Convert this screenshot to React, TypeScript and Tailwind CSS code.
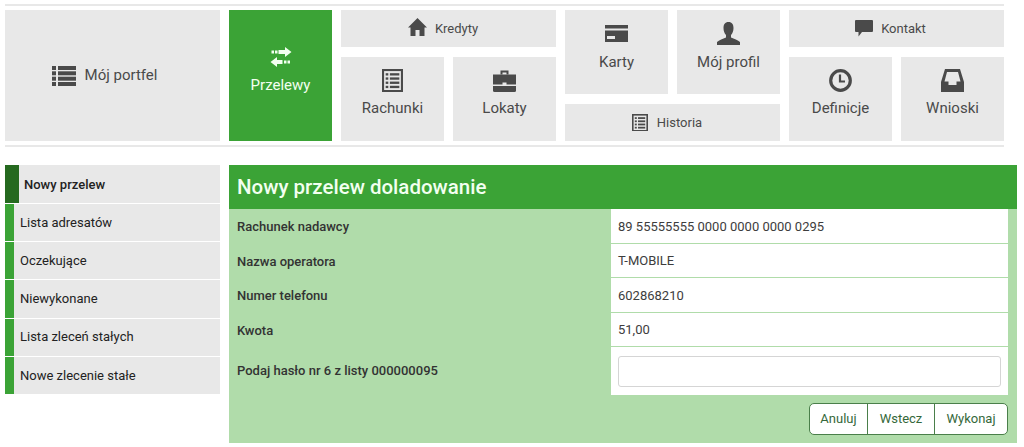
import type { ReactNode } from "react";

const ListIcon = () => (
  <svg width="24" height="20" viewBox="0 0 24 20" fill="currentColor">
    <rect x="0" y="0" width="4" height="4" />
    <rect x="6" y="0" width="18" height="4" />
    <rect x="0" y="5.300" width="4" height="4" />
    <rect x="6" y="5.300" width="18" height="4" />
    <rect x="0" y="10.700" width="4" height="4" />
    <rect x="6" y="10.700" width="18" height="4" />
    <rect x="0" y="16" width="4" height="4" />
    <rect x="6" y="16" width="18" height="4" />
  </svg>
);

const TransferIcon = () => (
  <svg width="22" height="20" viewBox="0 0 22 20" fill="currentColor">
    <rect x="1.500" y="3.500" width="2.500" height="3" />
    <rect x="5" y="3.500" width="2.500" height="3" />
    <path d="M8.500 3H15V0L21.500 5 15 10V7H8.500z" />
    <path d="M12.500 13H7V10L0.500 15 7 20V17H12.500z" />
    <rect x="14" y="13.500" width="2.500" height="3" />
    <rect x="17.500" y="13.500" width="2.500" height="3" />
  </svg>
);

const HomeIcon = () => (
  <svg width="19" height="18" viewBox="0 0 19 18" fill="currentColor" className="mb-1">
    <path d="M9.500 0L19 9.500H16.500V18H11.500V12H7.500V18H2.500V9.500H0z" />
  </svg>
);

const LedgerIcon = ({ size = 21 }: { size?: number }) => (
  <svg width={size} height={size * 1.1} viewBox="0 0 20 22" fill="none">
    <rect x="0" y="0" width="20" height="22" fill="currentColor" />
    <rect x="2" y="2" width="16" height="18" fill="#e8e8e8" />
    <g fill="currentColor">
      <rect x="3.500" y="4" width="2.500" height="2.200" />
      <rect x="7.500" y="4" width="9" height="2.200" />
      <rect x="3.500" y="8" width="2.500" height="2.200" />
      <rect x="7.500" y="8" width="9" height="2.200" />
      <rect x="3.500" y="12" width="2.500" height="2.200" />
      <rect x="7.500" y="12" width="9" height="2.200" />
      <rect x="3.500" y="16" width="2.500" height="2.200" />
      <rect x="7.500" y="16" width="9" height="2.200" />
    </g>
  </svg>
);

const BriefcaseIcon = () => (
  <svg width="23" height="22" viewBox="0 0 23 22" fill="currentColor">
    <path d="M7.500 4.500V0.500h8V4.500H13.500V2.500h-4V4.500z" />
    <path d="M0 4.500h23v10H0z" />
    <path d="M0 16h23v4.500a1.500 1.500 0 0 1-1.500 1.500H1.500A1.500 1.500 0 0 1 0 20.500z" />
    <rect x="9.500" y="12.500" width="4" height="3" fill="#e8e8e8" />
  </svg>
);

const CardIcon = () => (
  <svg width="23" height="17" viewBox="0 0 23 17" fill="currentColor">
    <rect x="0" y="0" width="23" height="3.500" />
    <path d="M0 5.500h23V17H0z" />
    <rect x="2" y="11" width="8" height="3" fill="#e8e8e8" />
  </svg>
);

const UserIcon = () => (
  <svg width="23" height="23" viewBox="0 0 23 23" fill="currentColor">
    <path d="M11.500 0C15 0 16.500 2.500 16.500 6c0 3-1 5.500-2.500 7v2.500c3 1.500 7 2.500 9 4.500v3H0v-3c2-2 6-3 9-4.500V13C7.500 11.500 6.500 9 6.500 6c0-3.500 1.500-6 5-6z" />
  </svg>
);

const ChatIcon = () => (
  <svg width="18" height="17" viewBox="0 0 18 17" fill="currentColor">
    <path d="M1 0h16a1 1 0 0 1 1 1v10a1 1 0 0 1-1 1H7l-3.500 4.500V12H1a1 1 0 0 1-1-1V1a1 1 0 0 1 1-1z" />
  </svg>
);

const ClockIcon = () => (
  <svg width="23" height="23" viewBox="0 0 23 23" fill="none" stroke="currentColor">
    <circle cx="11.500" cy="11.500" r="9.800" strokeWidth="3.200" />
    <path d="M11 5.500V12.500H16" strokeWidth="2.200" />
  </svg>
);

const InboxIcon = () => (
  <svg width="23" height="23" viewBox="0 0 23 23" fill="currentColor">
    <path d="M4 0H19L23 13V23H0V13zM6 3L3.500 12.500H7.500V16H15.500V12.500H19.500L17 3z" fillRule="evenodd" />
  </svg>
);

// kafelek w menu górnym: ikona nad tekstem albo obok
function Tile({
  icon,
  label,
  active,
  className,
}: {
  icon: ReactNode;
  label: string;
  active?: boolean;
  className: string;
}) {
  return (
    <a
      className={`flex items-center justify-center ${
        active ? "bg-[#3ba336] text-[#f2fff0]" : "bg-[#e8e8e8] text-[#4a4a4a]"
      } ${className}`}
    >
      {icon}
      <span>{label}</span>
    </a>
  );
}

const sideItems = ["Lista adresatów", "Oczekujące", "Niewykonane", "Lista zleceń stałych", "Nowe zlecenie stałe"];

const formRows = [
  ["Rachunek nadawcy", "89 55555555 0000 0000 0000 0295"],
  ["Nazwa operatora", "T-MOBILE"],
  ["Numer telefonu", "602868210"],
  ["Kwota", "51,00"],
];

export default function App() {
  return (
    <div className="h-[447px] w-[1024px] overflow-hidden bg-white pt-1 font-['Roboto',sans-serif]">
      <nav className="ml-[5px] w-[999px] border-y-2 border-[#e8e8e8] py-1">
        <div className="grid grid-cols-[repeat(9,103px)] grid-rows-[repeat(3,37px)] gap-x-[9px] gap-y-[10px] text-[15px]">
          <Tile className="col-span-2 row-span-3 gap-[9px] pr-[16px]" icon={<ListIcon />} label="Mój portfel" />
          <Tile className="row-span-3 flex-col gap-[7px] pb-[8px]" active icon={<TransferIcon />} label="Przelewy" />
          <Tile className="col-span-2 gap-2 pr-[11px] text-[13px]" icon={<HomeIcon />} label="Kredyty" />
          <Tile className="row-span-2 flex-col gap-[9px] pb-[6px]" icon={<CardIcon />} label="Karty" />
          <Tile className="row-span-2 flex-col gap-[6px] pb-[8px]" icon={<UserIcon />} label="Mój profil" />
          <Tile className="col-span-2 gap-2 pr-[12px] text-[13px]" icon={<ChatIcon />} label="Kontakt" />
          <Tile className="col-start-4 row-span-2 row-start-2 flex-col gap-[5px] pb-[9px]" icon={<LedgerIcon />} label="Rachunki" />
          <Tile className="col-start-5 row-span-2 row-start-2 flex-col gap-[5px] pb-[9px]" icon={<BriefcaseIcon />} label="Lokaty" />
          <Tile className="col-span-2 col-start-6 row-start-3 gap-[9px] pr-[11px] text-[13px]" icon={<LedgerIcon size={16} />} label="Historia" />
          <Tile className="col-start-8 row-span-2 row-start-2 flex-col gap-[5px] pb-[9px]" icon={<ClockIcon />} label="Definicje" />
          <Tile className="col-start-9 row-span-2 row-start-2 flex-col gap-[5px] pb-[9px]" icon={<InboxIcon />} label="Wnioski" />
        </div>
      </nav>

      <div className="ml-[5px] mt-[18px] flex gap-[9px]">
        <aside className="w-[215px] shrink-0 text-[13px] text-[#222]">
          <div className="flex h-[38px] items-center bg-[#e8e8e8] font-medium">
            <div className="h-full w-[14px] bg-[#25691f]" />
            <span className="ml-[5px] pt-[1px]">Nowy przelew</span>
          </div>
          {sideItems.map((item) => (
            <div key={item} className="flex h-[38.2px] items-center border-t border-white bg-[#e8e8e8]">
              <div className="h-full w-[9px] bg-[#3ba336]" />
              <span className="ml-[6px]">{item}</span>
            </div>
          ))}
        </aside>

        <main className="h-[278px] w-[788px] bg-[#b0dcaa]">
          <h1 className="flex h-[44px] items-center bg-[#3ba336] pl-2 text-[20.5px] font-medium text-[#f2fff0]">
            Nowy przelew doladowanie
          </h1>
          {formRows.map(([label, value]) => (
            <div key={label} className="flex h-[34.5px] items-center">
              <div className="w-[382px] pl-2 pt-[1px] text-[13px] font-medium text-[#333]">{label}</div>
              <div className="flex h-full w-[397px] items-center border-b border-[#b0dcaa] bg-white pl-[7px] pt-[1px] text-[13px] text-[#3d3d3d]">
                {value}
              </div>
            </div>
          ))}
          <div className="flex h-[48px]">
            <div className="w-[382px] pl-2 pt-[14px] text-[13px] font-medium text-[#333]">
              Podaj hasło nr 6 z listy 000000095
            </div>
            <div className="w-[397px] bg-white px-[7px] pt-[9px]">
              <input className="h-[31px] w-full rounded-[3px] border border-[#d5d5d5] bg-white" />
            </div>
          </div>
          <div className="mt-[8px] flex w-[779px] justify-end">
            <div className="flex h-[32px] divide-x divide-[#4a7f4a] rounded-[5px] border border-[#4a7f4a] bg-white text-[13px] text-[#35683a]">
              <button className="w-[58px]">Anuluj</button>
              <button className="w-[67px]">Wstecz</button>
              <button className="w-[72px]">Wykonaj</button>
            </div>
          </div>
        </main>
      </div>
    </div>
  );
}
